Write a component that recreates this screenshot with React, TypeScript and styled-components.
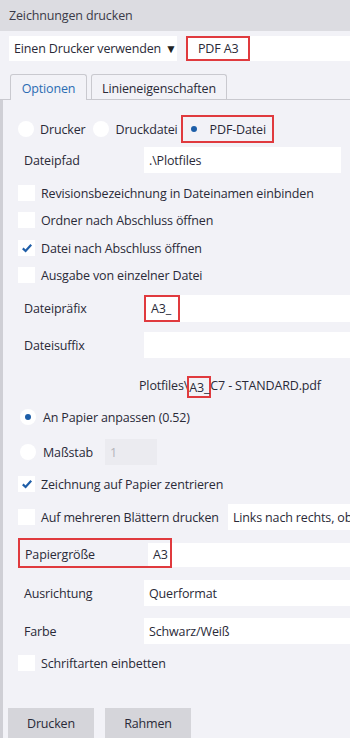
import { type FC } from "react";
import styled, { createGlobalStyle } from "styled-components";

const GlobalStyle = createGlobalStyle`
  html, body {
    margin: 0;
    padding: 0;
    background: #f2f2f7;
  }
  body {
    font-family: "Open Sans", "Noto Sans", "Liberation Sans", sans-serif;
    font-size: 12.5px;
    letter-spacing: -0.15px;
    color: #2a2a38;
  }
`;

const Window = styled.div`
  width: 350px;
  height: 738px;
  overflow: hidden;
  background: #f2f2f7;
  display: flex;
  flex-direction: column;
`;

const TitleBar = styled.div`
  height: 31px;
  flex: none;
  background: #dcdce1;
  color: #3a3a48;
  line-height: 31px;
  padding-left: 9px;
`;

const TopRow = styled.div`
  display: flex;
  gap: 9px;
  padding: 5px 0 0 9px;
  height: 26px;
`;

const PrinterSelect = styled.div`
  width: 163px;
  background: #fff;
  padding-left: 5px;
  display: flex;
  align-items: center;
  gap: 4px;
  white-space: nowrap;
`;

const Caret = styled.span`
  font-size: 12px;
  color: #222;
`;

const WideField = styled.div`
  flex: 1;
  background: #fff;
  display: flex;
  align-items: center;
  white-space: nowrap;
  overflow: hidden;
`;

const RedBox = styled.div<{ $w?: number; $h?: number }>`
  box-sizing: border-box;
  border: 2px solid #e03a3e;
  display: flex;
  align-items: center;
  ${(p) => (p.$w ? `width: ${p.$w}px;` : "")}
  ${(p) => (p.$h ? `height: ${p.$h}px;` : "height: 100%;")}
  flex: none;
`;

const TabBar = styled.div`
  margin-top: 13px;
  height: 25px;
  padding-left: 10px;
  display: flex;
  gap: 4px;
  border-bottom: 1px solid #c9c9cf;
`;

const Tab = styled.div<{ $active?: boolean; $w: number }>`
  box-sizing: border-box;
  width: ${(p) => p.$w}px;
  height: ${(p) => (p.$active ? 26 : 25)}px;
  border: 1px solid #c9c9cf;
  border-bottom: none;
  border-radius: 3px 3px 0 0;
  background: #f2f2f7;
  color: ${(p) => (p.$active ? "#2a6cb3" : "#2a2a38")};
  display: flex;
  align-items: center;
  justify-content: center;
  padding-top: 2px;
`;

const Panel = styled.div`
  flex: 1;
  border-left: 3px solid #cfcfd5;
  display: flex;
  flex-direction: column;
`;

const Row = styled.div<{ $mt: number; $h: number; $pl?: number }>`
  margin-top: ${(p) => p.$mt}px;
  height: ${(p) => p.$h}px;
  padding-left: ${(p) => p.$pl ?? 15}px;
  display: flex;
  align-items: center;
  white-space: nowrap;
`;

const RadioCircle = styled.span<{ $on?: boolean; $bare?: boolean }>`
  width: 16px;
  height: 16px;
  border-radius: 50%;
  background: ${(p) => (p.$bare ? "transparent" : "#fff")};
  flex: none;
  display: flex;
  align-items: center;
  justify-content: center;
  &::after {
    content: "";
    display: ${(p) => (p.$on ? "block" : "none")};
    width: 6px;
    height: 6px;
    border-radius: 50%;
    background: #1d5ea8;
  }
`;

const OptionText = styled.span<{ $gap?: number }>`
  margin-left: ${(p) => p.$gap ?? 6}px;
`;

const CheckBox = styled.span`
  width: 17px;
  height: 16px;
  background: #fff;
  flex: none;
  display: flex;
  align-items: center;
  justify-content: center;
`;

const FieldLabel = styled.span`
  width: 120px;
  padding-left: 6px;
  flex: none;
`;

const Input = styled.div<{ $w?: number; $disabled?: boolean }>`
  box-sizing: border-box;
  height: 100%;
  ${(p) => (p.$w ? `width: ${p.$w}px; flex: none;` : "flex: 1;")}
  background: ${(p) => (p.$disabled ? "#ebebf0" : "#fff")};
  color: ${(p) => (p.$disabled ? "#b4b4ba" : "#2a2a38")};
  padding-left: 5px;
  display: flex;
  align-items: center;
  overflow: hidden;
  white-space: nowrap;
`;

const PathLine = styled.div`
  margin-top: 15px;
  height: 24px;
  padding-left: 136px;
  display: flex;
  align-items: center;
  white-space: nowrap;
`;

const InlineMark = styled.span`
  box-sizing: border-box;
  border: 2px solid #e03a3e;
  height: 22px;
  display: inline-flex;
  align-items: flex-start;
  margin: 4px -1px 0;
  padding-top: 1px;
`;

const PaperBox = styled.div`
  box-sizing: border-box;
  width: 154px;
  height: 30px;
  border: 2px solid #e03a3e;
  display: flex;
  align-items: stretch;
  flex: none;
  padding-top: 3px;
`;

const ButtonBar = styled.div`
  margin-top: 33px;
  padding-left: 5px;
  display: flex;
  gap: 11px;
`;

const Button = styled.button`
  width: 86px;
  height: 30px;
  border: none;
  background: #d5d5da;
  font-family: inherit;
  font-size: 12.5px;
  letter-spacing: -0.15px;
  color: #2a2a38;
  padding: 0;
`;

const Check: FC = () => (
  <svg width="12" height="10" viewBox="0 0 12 10">
    <path d="M1.8 5.4 L4.6 8 L10.2 1.8" fill="none" stroke="#1f5ea8" strokeWidth="2.2" />
  </svg>
);

const CheckRow: FC<{ mt: number; label: string; checked?: boolean }> = ({
  mt,
  label,
  checked
}) => (
  <Row $mt={mt} $h={24}>
    <CheckBox>{checked && <Check />}</CheckBox>
    <OptionText>{label}</OptionText>
  </Row>
);

const App: FC = () => {
  return (
    <>
      <GlobalStyle />
      <Window>
        {/* Titel */}
        <TitleBar>Zeichnungen drucken</TitleBar>

        {/* Drucker */}
        <TopRow>
          <PrinterSelect>
            Einen Drucker verwenden <Caret>▼</Caret>
          </PrinterSelect>
          <WideField>
            <RedBox $w={64}>
              <OptionText $gap={10}>PDF A3</OptionText>
            </RedBox>
          </WideField>
        </TopRow>

        {/* Tabs */}
        <TabBar>
          <Tab $active $w={77}>
            Optionen
          </Tab>
          <Tab $w={136}>Linieneigenschaften</Tab>
        </TabBar>

        <Panel>
          <Row $mt={15} $h={28}>
            <RadioCircle />
            <OptionText>Drucker</OptionText>
            <RadioCircle style={{ marginLeft: 8 }} />
            <OptionText>Druckdatei</OptionText>
            <RedBox $w={93} $h={28} style={{ marginLeft: 3 }}>
              <RadioCircle $on $bare style={{ marginLeft: 3 }} />
              <OptionText $gap={8}>PDF-Datei</OptionText>
            </RedBox>
          </Row>

          <Row $mt={4} $h={26}>
            <FieldLabel>Dateipfad</FieldLabel>
            <Input $w={197}>.\Plotfiles</Input>
          </Row>

          <CheckRow mt={8} label="Revisionsbezeichnung in Dateinamen einbinden" />
          <CheckRow mt={3} label="Ordner nach Abschluss öffnen" />
          <CheckRow mt={4} label="Datei nach Abschluss öffnen" checked />
          <CheckRow mt={3} label="Ausgabe von einzelner Datei" />

          <Row $mt={8} $h={27}>
            <FieldLabel>Dateipräfix</FieldLabel>
            <Input style={{ paddingLeft: 0 }}>
              <RedBox $w={36}>
                <OptionText $gap={5}>A3_</OptionText>
              </RedBox>
            </Input>
          </Row>

          <Row $mt={10} $h={26}>
            <FieldLabel>Dateisuffix</FieldLabel>
            <Input />
          </Row>

          <PathLine>
            Plotfiles\<InlineMark>A3_</InlineMark>C7 - STANDARD.pdf
          </PathLine>

          <Row $mt={8} $h={24} $pl={17}>
            <RadioCircle $on />
            <OptionText $gap={7}>An Papier anpassen (0.52)</OptionText>
          </Row>

          <Row $mt={10} $h={26} $pl={17}>
            <RadioCircle />
            <OptionText $gap={7}>Maßstab</OptionText>
            <Input $w={52} $disabled style={{ marginLeft: 12 }}>
              1
            </Input>
          </Row>

          <CheckRow mt={7} label="Zeichnung auf Papier zentrieren" checked />

          <Row $mt={8} $h={26}>
            <CheckBox />
            <OptionText>Auf mehreren Blättern drucken</OptionText>
            <Input style={{ marginLeft: 9 }}>Links nach rechts, oben nach unten</Input>
          </Row>

          <Row $mt={8} $h={30}>
            <PaperBox>
              <FieldLabel style={{ width: 123, paddingLeft: 5, alignSelf: "center" }}>
                Papiergröße
              </FieldLabel>
              <Input>A3</Input>
            </PaperBox>
            <Input style={{ height: 24, alignSelf: "flex-end", marginBottom: 1 }} />
          </Row>

          <Row $mt={12} $h={26}>
            <FieldLabel>Ausrichtung</FieldLabel>
            <Input>Querformat</Input>
          </Row>

          <Row $mt={12} $h={26}>
            <FieldLabel>Farbe</FieldLabel>
            <Input>Schwarz/Weiß</Input>
          </Row>

          <CheckRow mt={7} label="Schriftarten einbetten" />

          <ButtonBar>
            <Button>Drucken</Button>
            <Button>Rahmen</Button>
          </ButtonBar>
        </Panel>
      </Window>
    </>
  );
};

export default App;
